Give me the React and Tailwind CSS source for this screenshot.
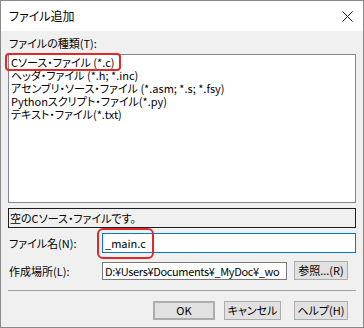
import React from "react";

const fileTypes = [
  "Cソース・ファイル (*.c)",
  "ヘッダ・ファイル (*.h; *.inc)",
  "アセンブリ・ソース・ファイル (*.asm; *.s; *.fsy)",
  "Pythonスクリプト・ファイル(*.py)",
  "テキスト・ファイル(*.txt)",
];

const Btn = ({ children, className = "" }) => (
  <button
    type="button"
    className={`h-[19px] bg-[#e1e1e1] border border-[#adadad] text-[11px] leading-[15px] text-black flex items-center justify-center whitespace-nowrap ${className}`}
  >
    {children}
  </button>
);

export default function App() {
  return (
    <div className="relative w-[364px] h-[328px] font-['Noto_Sans_CJK_JP',sans-serif] text-[11px] text-black [font-feature-settings:'palt']">
      <div className="w-full h-full border border-[#8a8a8a] bg-[#f0f0f0] flex flex-col overflow-hidden">
        {/* title bar */}
        <div className="h-[30px] bg-white flex items-center justify-between pl-[8px] pr-[10px] shrink-0">
          <span className="text-[12px] leading-[14px]">ファイル追加</span>
          <svg width="11" height="11" viewBox="0 0 11 11" className="text-[#1a1a1a]">
            <path d="M0.5 0.5 L10.5 10.5 M10.5 0.5 L0.5 10.5" stroke="currentColor" strokeWidth="1" fill="none" />
          </svg>
        </div>

        <div className="px-[7px] flex flex-col">
          <div className="mt-[5px] h-[14px] leading-[14px] pl-[1px]">ファイルの種類(T):</div>

          <div className="mt-[4px] h-[149px] border border-[#828790] bg-white pt-[1px] pl-[2px] leading-[13px]">
            {fileTypes.map((t) => (
              <div key={t} className="h-[13px] leading-[13px] whitespace-nowrap">{t}</div>
            ))}
          </div>

          <div className="mt-[5px] h-[20px] border border-[#1e1e1e] bg-[#f0f0f0] pl-[1px] leading-[18px]">
            空のCソース・ファイルです。
          </div>

          <div className="mt-[5px] h-[20px] flex items-center">
            <span className="w-[94px] leading-[14px] pl-[1px]">ファイル名(N):</span>
            <div className="flex-1 h-[20px] border border-[#0078d7] bg-white pl-[2px] leading-[18px]">_main.c</div>
          </div>

          <div className="mt-[8px] h-[19px] flex items-center">
            <span className="w-[94px] leading-[14px] pl-[1px]">作成場所(L):</span>
            <div className="w-[185px] h-[18px] border border-[#7a7a7a] bg-white pl-[2px] leading-[16px] overflow-hidden whitespace-nowrap tracking-[-0.35px]">
              D:¥Users¥Documents¥_MyDoc¥_wo
            </div>
            <Btn className="ml-[7px] w-[54px]">参照...(R)</Btn>
          </div>

          <div className="mt-[10px] border-t border-[#a0a0a0]" />

          <div className="mt-[10px] flex justify-end pr-[8px]">
            <Btn className="w-[62px] border-[#0078d7] border-2">OK</Btn>
            <Btn className="ml-[9px] w-[57px]">キャンセル</Btn>
            <Btn className="ml-[13px] w-[54px]">ヘルプ(H)</Btn>
          </div>
        </div>
      </div>

      {/* annotations */}
      <div className="absolute left-[5px] top-[53px] w-[116px] h-[18px] border-2 border-[#e02a2a] rounded-[4px]" />
      <div className="absolute left-[97px] top-[228px] w-[57px] h-[31px] border-2 border-[#e02a2a] rounded-[6px]" />
    </div>
  );
}
